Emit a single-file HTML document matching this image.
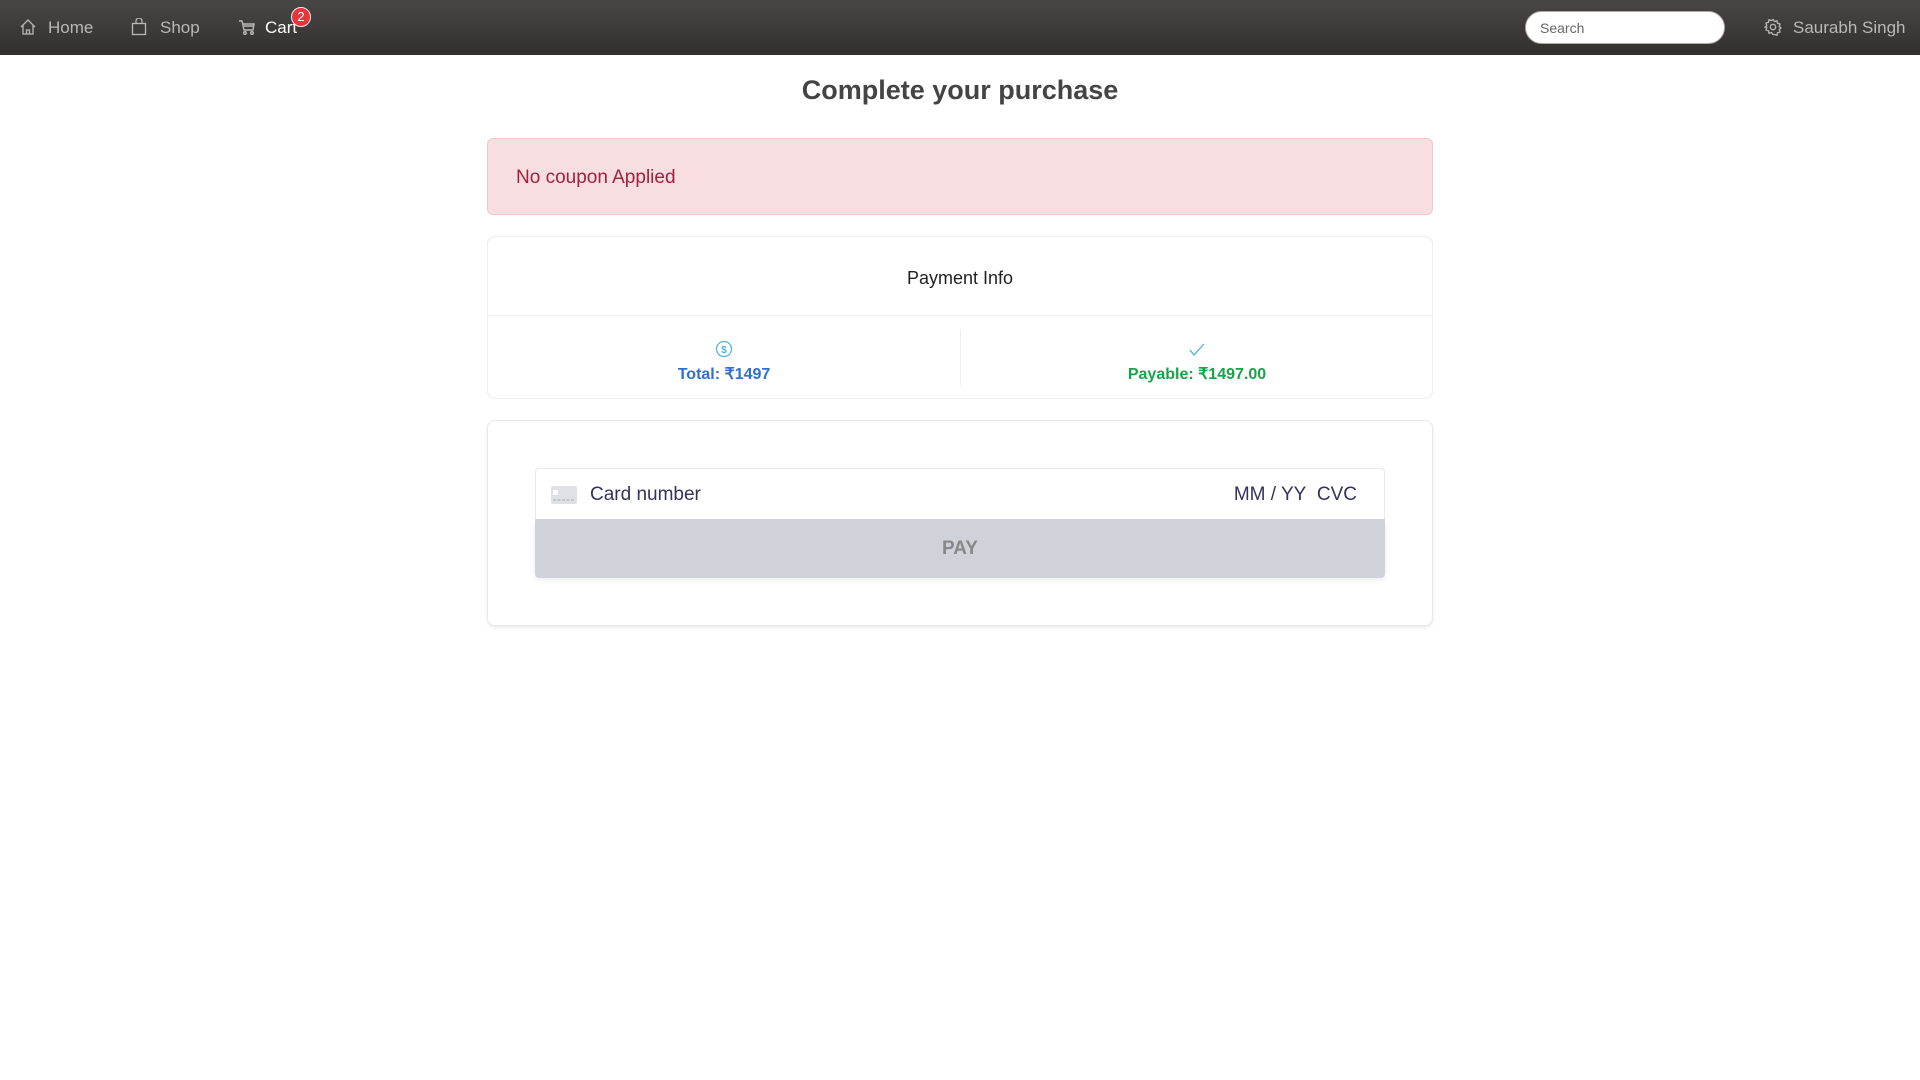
<!DOCTYPE html>
<html><head><meta charset="utf-8"><style>
*{box-sizing:border-box;margin:0;padding:0}
body{width:1920px;height:1080px;background:#fff;font-family:"Liberation Sans",sans-serif;position:relative;overflow:hidden}
.nav{position:absolute;left:0;top:0;width:1920px;height:55px;background:linear-gradient(#4a4646,#332f2f)}
.ni{position:absolute;top:18px;font-size:17px;color:#b9b7b7}
.ic{position:absolute;top:18px}
.badge{position:absolute;left:291px;top:7px;width:20px;height:20px;border-radius:50%;background:#e8333a;border:1.5px solid #eee;color:#fff;font-size:13px;text-align:center;line-height:17px}
.search{position:absolute;left:1525px;top:11px;width:200px;height:33px;border-radius:17px;background:#fff;border:1px solid #aaa;font-size:14px;color:#666;padding:8px 0 0 14px}
h1{position:absolute;top:75px;width:1920px;text-align:center;font-size:27px;font-weight:bold;color:#444}
.alert{position:absolute;left:487px;top:138px;width:946px;height:77px;background:#f8dde1;border:1px solid #f4c7cd;border-radius:6px;color:#a0233b;font-size:19px;padding:28px 0 0 28px}
.card{position:absolute;left:487px;top:236px;width:946px;height:163px;border:1px solid #eceef0;border-radius:8px}
.card .hd{height:79px;border-bottom:1px solid #eceef0;text-align:center;font-size:18px;color:#222;padding-top:31px}
.col{position:absolute;top:127px;width:472px;text-align:center;font-size:16px;font-weight:bold}
.stripe{position:absolute;left:487px;top:420px;width:946px;height:206px;border:1px solid #e6e8eb;border-radius:8px;box-shadow:0 2px 3px rgba(0,0,0,.08)}
.inp{position:absolute;left:535px;top:468px;width:850px;height:52px;border:1px solid #e6e8ec;border-bottom:none;border-radius:4px 4px 0 0;color:#32325d;font-size:19px}
.pay{position:absolute;left:535px;top:519px;width:850px;height:59px;background:#cfd2d9;border-radius:0 0 4px 4px;text-align:center;color:#888;font-size:19px;font-weight:bold;padding-top:19px;box-shadow:0 3px 6px rgba(0,0,0,.06)}
</style></head><body>
<div class="nav">
<svg class="ic" style="left:19px" width="18" height="18" viewBox="0 0 18 18" fill="none" stroke="#b9b7b7" stroke-width="1.3"><path d="M2 9L9 2l7 7M4 7.5V16h10V7.5M7.5 16v-4h3v4"/></svg>
<span class="ni" style="left:48px">Home</span>
<svg class="ic" style="left:131px" width="16" height="18" viewBox="0 0 16 18" fill="none" stroke="#b9b7b7" stroke-width="1.3"><rect x="1.5" y="5.5" width="13" height="11"/><path d="M5 5.5V3a3 3 0 0 1 6 0v2.5"/></svg>
<span class="ni" style="left:160px">Shop</span>
<svg class="ic" style="left:238px" width="18" height="18" viewBox="0 0 18 18" fill="none" stroke="#b9b7b7" stroke-width="1.4"><path d="M1 3h3l2 9h9l1-6H5M6 8h10"/><circle cx="7" cy="15" r="1.3"/><circle cx="14" cy="15" r="1.3"/></svg>
<span class="ni" style="left:265px;color:#fff">Cart</span>
<div class="badge">2</div>
<div class="search">Search</div>
<svg class="ic" style="left:1764px;top:18px" width="18" height="18" viewBox="0 0 18 18" fill="none" stroke="#b9b7b7" stroke-width="1.3"><circle cx="9" cy="9" r="2.7"/><path d="M9 1.5l1.5 2 2.5-.8.5 2.5 2.5.8-.8 2.5 1.8 1.5-1.8 1.5.8 2.5-2.5.8-.5 2.5-2.5-.8L9 16.5l-1.5-2-2.5.8-.5-2.5-2.5-.8.8-2.5L1 9l1.8-1.5L2 5l2.5-.8L5 1.7l2.5.8z"/></svg>
<span class="ni" style="left:1793px">Saurabh Singh</span>
</div>
<h1>Complete your purchase</h1>
<div class="alert">No coupon Applied</div>
<div class="card">
<div class="hd">Payment Info</div>
<div style="position:absolute;left:472px;top:92px;width:1px;height:56px;background:#eceef0"></div>
<div class="col" style="left:0;color:#2f6fd0"><svg width="18" height="18" viewBox="0 0 18 18" style="position:absolute;left:227px;top:-24px" fill="none" stroke="#4fb0dc" stroke-width="1.2"><circle cx="9" cy="9" r="7.5"/><text x="9" y="13" font-size="10" text-anchor="middle" fill="#4fb0dc" stroke="none" font-family="Liberation Sans">$</text></svg>Total: ₹1497</div>
<div class="col" style="left:473px;color:#17a34a"><svg width="18" height="14" viewBox="0 0 18 14" style="position:absolute;left:227px;top:-21px" fill="none" stroke="#4fb0dc" stroke-width="1.3"><path d="M2 7l4 5L16 1"/></svg>Payable: ₹1497.00</div>
</div>
<div class="stripe"></div>
<div class="inp">
<svg style="position:absolute;left:15px;top:17px" width="26" height="18" viewBox="0 0 26 18"><rect width="26" height="18" rx="2" fill="#dfe1e6"/><rect x="2" y="4" width="5" height="5" fill="#fff"/><path d="M2 14h22" stroke="#a5a9b3" stroke-dasharray="3 1.5"/></svg>
<span style="position:absolute;left:54px;top:15px">Card number</span>
<span style="position:absolute;right:27px;top:15px">MM / YY&nbsp; CVC</span>
</div>
<div class="pay">PAY</div>
</body></html>
